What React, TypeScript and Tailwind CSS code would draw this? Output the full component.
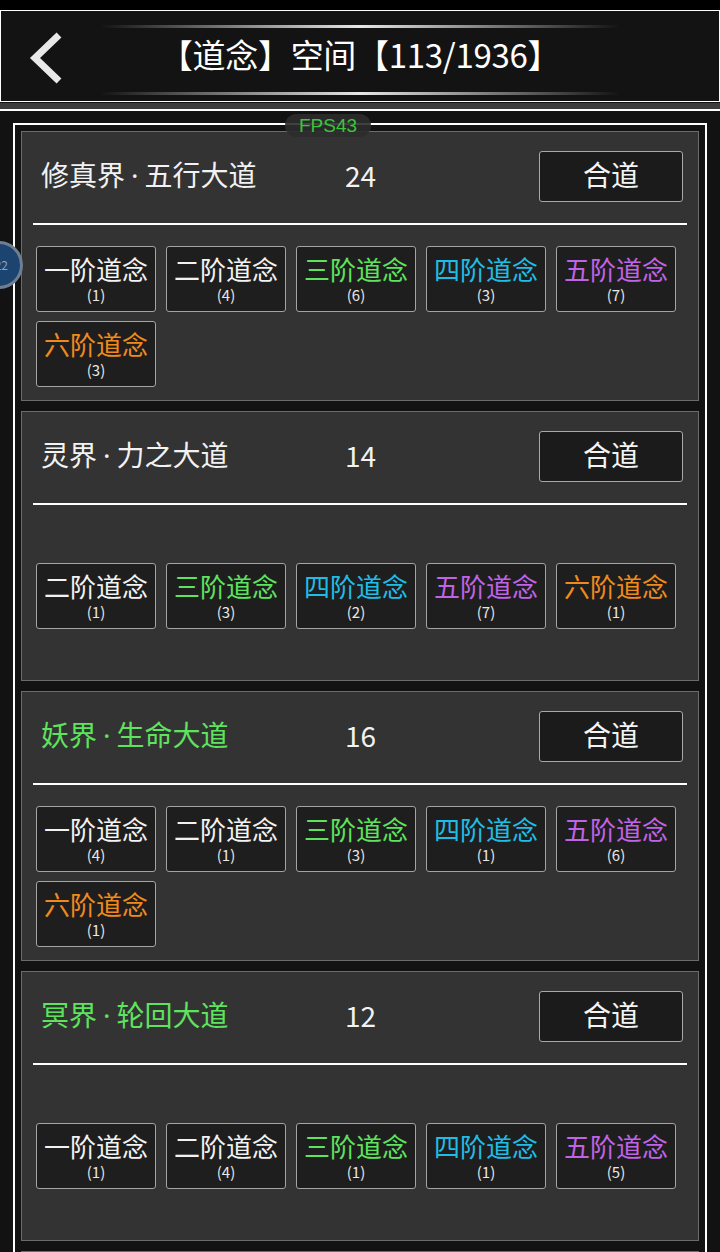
import React from "react";

type Tier = { label: string; count: number; color: string };

const WHITE = "text-[#f2f2f2]";
const GREEN = "text-[#5ee35e]";
const CYAN = "text-[#1fbde6]";
const PURPLE = "text-[#c163e6]";
const ORANGE = "text-[#f08a1c]";

const realms: { name: string; path: string; titleColor: string; total: number; tiers: Tier[] }[] = [
  {
    name: "修真界",
    path: "五行大道",
    titleColor: WHITE,
    total: 24,
    tiers: [
      { label: "一阶道念", count: 1, color: WHITE },
      { label: "二阶道念", count: 4, color: WHITE },
      { label: "三阶道念", count: 6, color: GREEN },
      { label: "四阶道念", count: 3, color: CYAN },
      { label: "五阶道念", count: 7, color: PURPLE },
      { label: "六阶道念", count: 3, color: ORANGE },
    ],
  },
  {
    name: "灵界",
    path: "力之大道",
    titleColor: WHITE,
    total: 14,
    tiers: [
      { label: "二阶道念", count: 1, color: WHITE },
      { label: "三阶道念", count: 3, color: GREEN },
      { label: "四阶道念", count: 2, color: CYAN },
      { label: "五阶道念", count: 7, color: PURPLE },
      { label: "六阶道念", count: 1, color: ORANGE },
    ],
  },
  {
    name: "妖界",
    path: "生命大道",
    titleColor: GREEN,
    total: 16,
    tiers: [
      { label: "一阶道念", count: 4, color: WHITE },
      { label: "二阶道念", count: 1, color: WHITE },
      { label: "三阶道念", count: 3, color: GREEN },
      { label: "四阶道念", count: 1, color: CYAN },
      { label: "五阶道念", count: 6, color: PURPLE },
      { label: "六阶道念", count: 1, color: ORANGE },
    ],
  },
  {
    name: "冥界",
    path: "轮回大道",
    titleColor: GREEN,
    total: 12,
    tiers: [
      { label: "一阶道念", count: 1, color: WHITE },
      { label: "二阶道念", count: 4, color: WHITE },
      { label: "三阶道念", count: 1, color: GREEN },
      { label: "四阶道念", count: 1, color: CYAN },
      { label: "五阶道念", count: 5, color: PURPLE },
    ],
  },
];

const font = { fontFamily: '"Noto Sans CJK SC", "Noto Sans", sans-serif' };
const latin = { fontFamily: '"Noto Sans", "Noto Sans CJK SC", sans-serif' };

function GlowLine() {
  return (
    <div className="h-[3px] w-[520px] bg-gradient-to-r from-transparent via-white to-transparent opacity-90" />
  );
}

export default function App() {
  return (
    <div className="relative w-[720px] h-[1252px] overflow-hidden bg-[#121212]" style={font}>
      {/* top bar */}
      <div className="h-[10px] bg-black" />
      <div className="relative h-[92px] border border-white bg-[#131313] flex flex-col items-center pt-[14px]">
        <GlowLine />
        <div className="h-[56px] flex items-center pb-[4px] text-[33px] text-white leading-none tracking-[-0.3px]">
          【道念】空间【113/1936】
        </div>
        <div className="mt-[8px]">
          <GlowLine />
        </div>
        <svg className="absolute left-[28px] top-[21px]" width="40" height="52" viewBox="0 0 40 52">
          <path d="M30 3 L6 26 L30 49" fill="none" stroke="#e8e8e8" strokeWidth="7" strokeLinecap="butt" />
        </svg>
      </div>
      <div className="h-[1px] bg-[#131313]" />
      <div className="h-[6px] bg-[#3c3c3c]" />
      <div className="h-[2px] bg-white" />

      {/* list frame */}
      <div className="relative mt-[12px] ml-[13px] w-[694px] border-2 border-white p-[6px] flex flex-col gap-[10px]">
        {realms.map((r) => (
          <div key={r.name} className="h-[270px] border border-[#6c6c6c] bg-[#333333] flex flex-col">
            <div className="h-[91px] flex items-center pl-[19px] pr-[15px]">
              <div className={`w-[304px] mb-[6px] text-[28px] leading-none ${r.titleColor}`}>
                {r.name}
                <span style={latin} className="mx-[6px]">·</span>
                {r.path}
              </div>
              <div className="flex-1 mb-[6px] text-[28px] leading-none text-[#f2f2f2]">{r.total}</div>
              <div className="w-[144px] h-[51px] mb-[2px] pb-[5px] border border-[#a8a8a8] rounded-[3px] bg-[#1b1b1b] flex items-center justify-center text-[28px] leading-none text-[#f4f4f4]">
                合道
              </div>
            </div>
            <div className="mx-[11px] h-[2px] bg-white" />
            <div className="flex-1 flex flex-wrap content-center gap-x-[10px] gap-y-[9px] pl-[14px] pt-[7px]">
              {r.tiers.map((t, i) => (
                <div
                  key={i}
                  className="w-[120px] h-[66px] border border-[#a4a4a4] rounded-[3px] bg-[#1e1e1e] flex flex-col items-center pt-[7px]"
                >
                  <div className={`text-[26px] leading-[30px] ${t.color}`}>{t.label}</div>
                  <div className="mt-[2px] text-[15px] leading-[18px] text-[#e8e8e8]">({t.count})</div>
                </div>
              ))}
            </div>
          </div>
        ))}
        <div className="h-[270px] border border-[#6c6c6c] bg-[#333333]" />
      </div>

      {/* fps badge */}
      <div
        className="absolute left-[285px] top-[114px] w-[86px] h-[23px] rounded-full bg-[#2c2c2c]/90 flex items-center justify-center text-[19px] leading-none text-[#3cc43c]"
        style={{ fontFamily: '"Liberation Sans", Arial, sans-serif' }}
      >
        FPS43
      </div>

      {/* floating ball */}
      <div className="absolute left-[-25px] top-[241px] w-[48px] h-[48px] rounded-full border-[3px] border-[#6f7e90] bg-[#1c4470] flex items-center justify-end pr-[12px] text-[12px] text-[#8fa3bb]">
        22
      </div>
    </div>
  );
}
